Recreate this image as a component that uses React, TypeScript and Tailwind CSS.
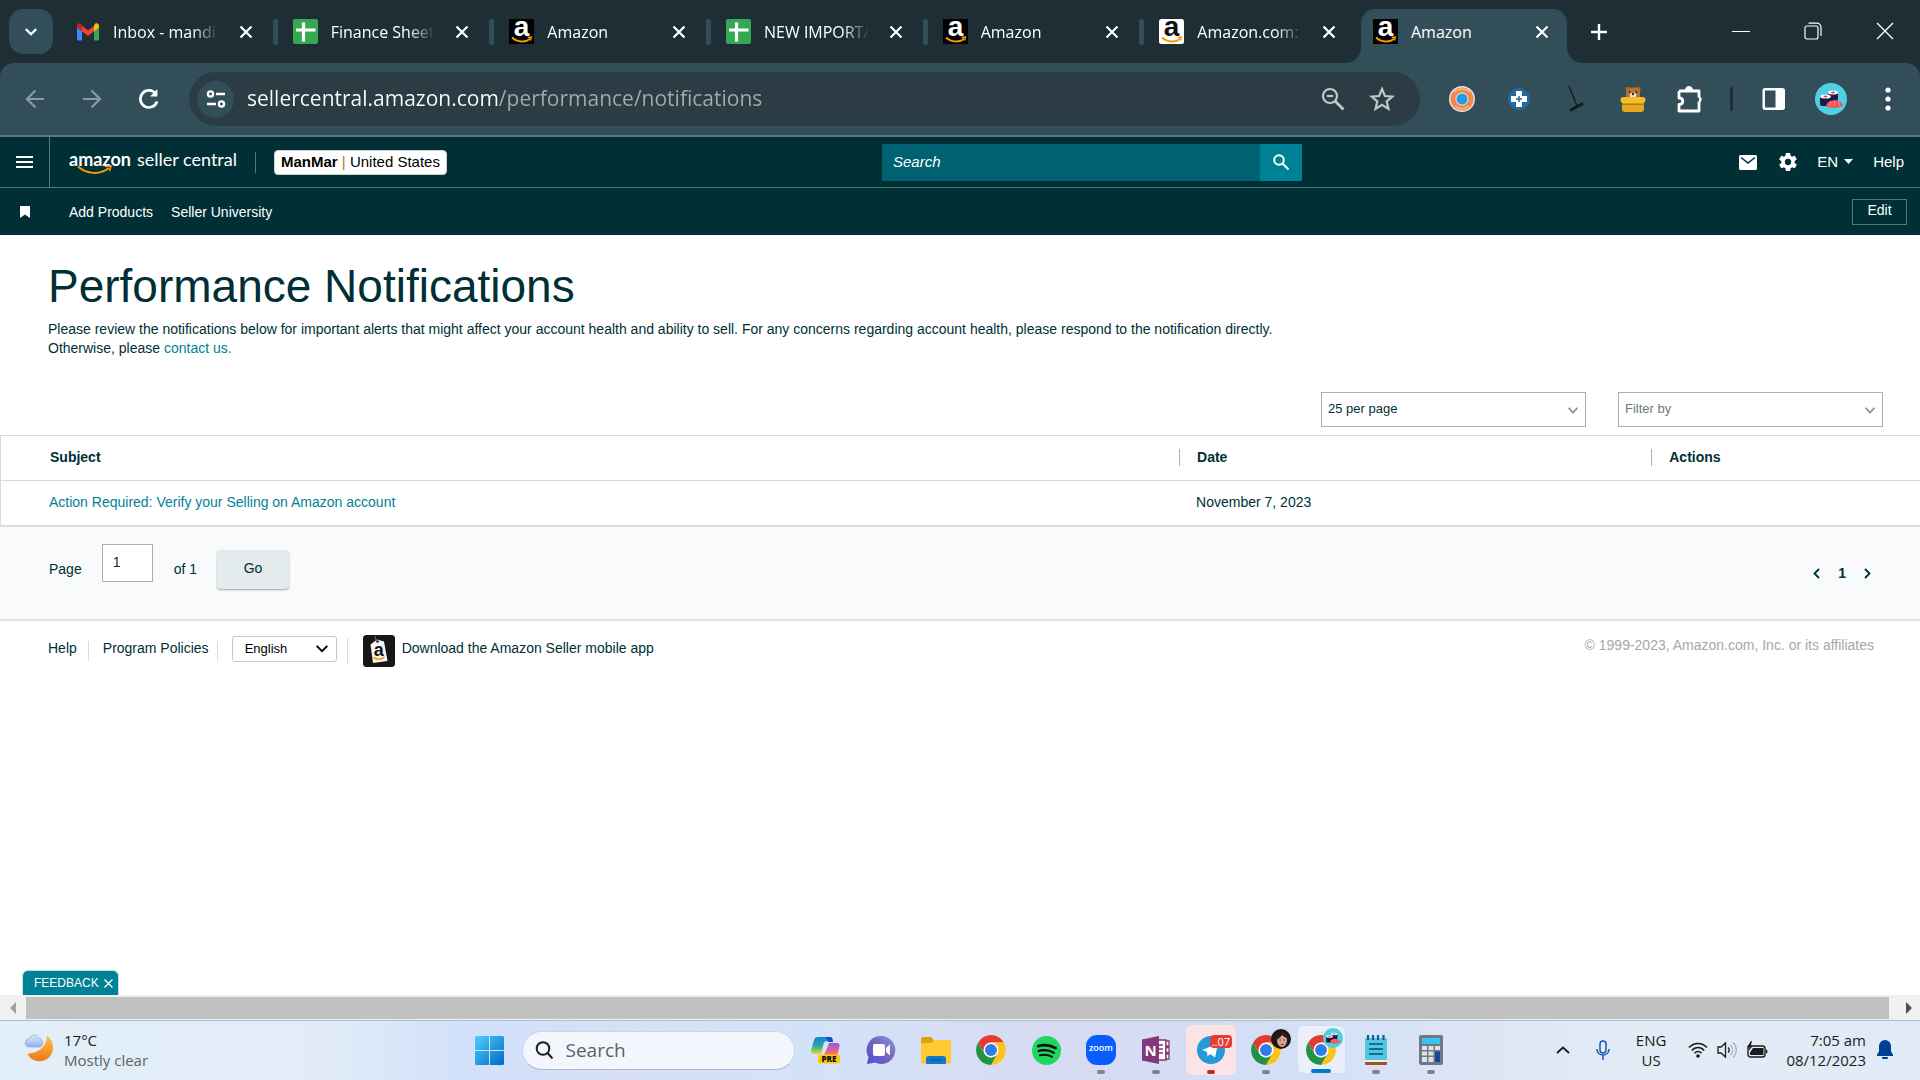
import type { ReactNode } from "react";

const tabs = [
  { title: "Inbox - mandi", icon: "gmail" },
  { title: "Finance Sheet", icon: "sheet" },
  { title: "Amazon", icon: "amazonDark" },
  { title: "NEW IMPORTA", icon: "sheet" },
  { title: "Amazon", icon: "amazonDark" },
  { title: "Amazon.com:", icon: "amazonLight" },
];

function Gmail() {
  return (
    <svg viewBox="0 0 24 24" className="size-6">
      <path d="M1 5.5V19a1.6 1.6 0 0 0 1.6 1.6H6V10.5L1 6.5z" fill="#4285f4" />
      <path d="M18 20.6h3.4A1.6 1.6 0 0 0 23 19V6.5l-5 4z" fill="#34a853" />
      <path d="M18 5.8v5.6l5-3.9V5.6c0-2-2.3-3.1-3.9-1.9z" fill="#fbbc04" />
      <path d="M6 11.4V5.8l6 4.6 6-4.6v5.6L12 16z" fill="#ea4335" />
      <path d="M1 5.6v1.9l5 3.9V5.8L4.900 3.700C3.300 2.500 1 3.600 1 5.600z" fill="#c5221f" />
    </svg>
  );
}

function Sheet() {
  return (
    <svg viewBox="0 0 25 25" className="size-[25px]">
      <rect width="25" height="25" rx="2" fill="#34a853" />
      <path d="M10.500 3.500v19M3 11h19.500" stroke="#fff" strokeWidth="3.200" />
    </svg>
  );
}

function AmazonMark({ dark }: { dark: boolean }) {
  return (
    <svg viewBox="0 0 25 25" className="size-[25px]">
      <rect width="25" height="25" rx={dark ? 0 : 2.5} fill={dark ? "#000" : "#fff"} />
      <text x="12.500" y="17" textAnchor="middle" fontSize="28" fontWeight="700" fontFamily="Liberation Sans, sans-serif" fill={dark ? "#fff" : "#111"}>
        a
      </text>
      <path d="M3 18.500c5.500 5 13.500 5.200 18.300 1.200" stroke="#f90" strokeWidth="2" fill="none" />
      <path d="M18.500 18.400l4-.4-.9 3.500" stroke="#f90" strokeWidth="1.300" fill="none" />
    </svg>
  );
}

function Favicon({ name }: { name: string }) {
  if (name === "gmail") return <Gmail />;
  if (name === "sheet") return <Sheet />;
  return <AmazonMark dark={name === "amazonDark"} />;
}

function Cross({ className }: { className: string }) {
  return (
    <svg viewBox="0 0 14 14" className={className} fill="none" stroke="currentColor" strokeWidth="2.200">
      <path d="M1.500 1.500l11 11M12.500 1.500l-11 11" />
    </svg>
  );
}

function TabStrip() {
  return (
    <div className="flex h-[63px] items-end bg-[#1e2e34] text-base text-white">
      <button aria-label="Search tabs" className="mb-[9px] ml-[9px] flex h-[45px] w-11 shrink-0 items-center justify-center rounded-[14px] bg-[#324e59]">
        <svg viewBox="0 0 14 9" className="h-2 w-3.5" fill="none" stroke="#fff" strokeWidth="2.600">
          <path d="M1.200 1.200L7 7l5.800-5.800" />
        </svg>
      </button>
      <div className="flex w-[1308px] shrink items-end pl-2">
        {tabs.map((tab, i) => (
          <div key={i} className="flex h-[54px] min-w-0 flex-1 items-center">
            <div className="flex w-full items-center pb-[9px] pl-[15px]">
              <Favicon name={tab.icon} />
              <span className="ml-[13px] flex-1 overflow-hidden whitespace-nowrap [mask-image:linear-gradient(to_right,#000_75%,transparent)]">{tab.title}</span>
              <button aria-label="Close tab" className="mx-4 shrink-0 p-1">
                <Cross className="size-3.5" />
              </button>
              <span className={i === 5 ? "h-[26px] w-[5px]" : "h-[26px] w-[5px] rounded-sm bg-[#324e59]"} />
            </div>
          </div>
        ))}
      </div>
      <div className="relative flex h-[54px] w-[206px] shrink-0 items-center rounded-t-[14px] bg-[#324e59] pb-[9px] pl-3 pr-3.5">
        <svg viewBox="0 0 16 16" className="absolute -left-4 bottom-0 size-4" fill="#324e59">
          <path d="M16 0v16H0C9 16 16 9 16 0z" />
        </svg>
        <svg viewBox="0 0 16 16" className="absolute -right-4 bottom-0 size-4" fill="#324e59">
          <path d="M0 0v16h16C7 16 0 9 0 0z" />
        </svg>
        <AmazonMark dark />
        <span className="ml-[13px] flex-1">Amazon</span>
        <button aria-label="Close tab" className="p-1">
          <Cross className="size-3.5" />
        </button>
      </div>
      <button aria-label="New tab" className="mb-[23px] ml-6">
        <svg viewBox="0 0 16 16" className="size-4" stroke="#fff" strokeWidth="2.400">
          <path d="M8 0v16M0 8h16" />
        </svg>
      </button>
      <div className="mb-[23px] ml-auto mr-[26px] flex items-center gap-[54px]">
        <button aria-label="Minimize" className="flex size-[18px] items-center">
          <span className="h-px w-full bg-white" />
        </button>
        <button aria-label="Restore" className="size-[18px]">
          <svg viewBox="0 0 18 18" className="size-[18px]" fill="none" stroke="#fff" strokeWidth="1.200">
            <rect x="1" y="4" width="13" height="13" rx="2" />
            <path d="M4.500 1.200H13a4 4 0 0 1 4 4V14" />
          </svg>
        </button>
        <button aria-label="Close window" className="size-[18px]">
          <svg viewBox="0 0 18 18" className="size-[18px]" stroke="#fff" strokeWidth="1.300">
            <path d="M1 1l16 16M17 1L1 17" />
          </svg>
        </button>
      </div>
    </div>
  );
}

function SushiAvatar({ className }: { className: string }) {
  return (
    <svg viewBox="0 0 32 32" className={className}>
      <circle cx="16" cy="16" r="16" fill="#4dd0e1" />
      <rect x="13" y="9" width="10" height="9" rx="2" fill="#1a1a4b" />
      <ellipse cx="18" cy="9.500" rx="5" ry="2" fill="#fff" />
      <ellipse cx="18" cy="9.500" rx="2" ry="1" fill="#f44336" />
      <rect x="5" y="13" width="11" height="10" rx="2" fill="#1a1a4b" />
      <ellipse cx="10.500" cy="13.500" rx="5.300" ry="2" fill="#fff" />
      <ellipse cx="10.500" cy="13.500" rx="2" ry="1" fill="#f44336" />
      <path d="M11 23c1-7 14-8 17-1-2 3-14 4-17 1z" fill="#f5504e" />
      <path d="M16 18.500l-1.500 4M20 17.500l-1 5.500M24 18.500v4" stroke="#ffab9f" strokeWidth=".8" />
    </svg>
  );
}

function ToolButton({ label, children }: { label: string; children: ReactNode }) {
  return (
    <button aria-label={label} className="flex w-[57px] shrink-0 items-center justify-center">
      {children}
    </button>
  );
}

function Toolbar() {
  return (
    <div className="flex bg-[#1e2e34]">
      <div className="flex h-[74px] w-full items-center rounded-t-[14px] border-b-2 border-[#5f7880] bg-[#324e59] pl-1.5">
        <ToolButton label="Back">
          <svg viewBox="0 0 20 20" className="size-5" fill="none" stroke="#8b9ba1" strokeWidth="2.200">
            <path d="M19 10H2M10.500 1.500L2 10l8.500 8.500" />
          </svg>
        </ToolButton>
        <ToolButton label="Forward">
          <svg viewBox="0 0 20 20" className="size-5" fill="none" stroke="#8b9ba1" strokeWidth="2.200">
            <path d="M1 10h17M9.500 1.500L18 10l-8.500 8.500" />
          </svg>
        </ToolButton>
        <ToolButton label="Reload">
          <svg viewBox="0 0 20 20" className="size-5" fill="none" stroke="#fff" strokeWidth="2.700">
            <path d="M18 12.500A8.500 8.500 0 1 1 16.800 5" />
            <path d="M18.400 0v7.500H11z" fill="#fff" stroke="none" />
          </svg>
        </ToolButton>
        <div className="ml-3 flex h-[54px] min-w-0 flex-1 items-center rounded-full bg-[#2b3c44] pl-2">
          <button aria-label="View site information" className="flex size-[37px] shrink-0 items-center justify-center rounded-full bg-[#324e59]">
            <svg viewBox="0 0 20 18" className="h-[18px] w-5" fill="none" stroke="#fff" strokeWidth="2.300">
              <circle cx="4.500" cy="4" r="2.600" />
              <path d="M10 4h9M1 14h9" />
              <circle cx="15.500" cy="14" r="2.600" />
            </svg>
          </button>
          <label htmlFor="url" className="sr-only">
            Address
          </label>
          <input
            id="url"
            defaultValue="sellercentral.amazon.com/performance/notifications"
            className="ml-[13px] min-w-0 flex-1 bg-[linear-gradient(90deg,#fff_252px,#a3abae_252px)] bg-clip-text text-[21px] text-transparent caret-white outline-none"
          />
          <button aria-label="Zoom" className="mr-6">
            <svg viewBox="0 0 24 24" className="size-6" fill="none" stroke="#c3c7c9" strokeWidth="2.200">
              <circle cx="9" cy="9" r="7" />
              <path d="M14 14l8.500 8.500" strokeWidth="2.800" />
              <path d="M5.800 9h6.400" />
            </svg>
          </button>
          <button aria-label="Bookmark this page" className="mr-[25px]">
            <svg viewBox="0 0 26 26" className="size-[26px]" fill="none" stroke="#c3c7c9" strokeWidth="2.200">
              <path d="M13 3l2.900 7 7.500.600-5.700 4.900 1.800 7.400-6.500-4-6.500 4 1.800-7.400-5.700-4.900 7.500-.600z" />
            </svg>
          </button>
        </div>
        <div className="ml-[13px] flex items-center">
          <ToolButton label="Rocket extension">
            <svg viewBox="0 0 26 26" className="size-[26px]">
              <circle cx="13" cy="13" r="13" fill="#e9e2dc" />
              <circle cx="13" cy="13" r="9" fill="none" stroke="#f08a4b" strokeWidth="5" />
              <path d="M5 6c4-4 12-4 16 0M6 20c4 4 11 3 14 0" stroke="#f7b98d" strokeWidth="1.500" fill="none" />
              <circle cx="13" cy="13" r="5.500" fill="#1f9be8" />
            </svg>
          </ToolButton>
          <ToolButton label="Plus extension">
            <svg viewBox="0 0 22 22" className="size-[22px]">
              <circle cx="11" cy="11" r="11" fill="#24699d" />
              <path d="M11 3v16M3 11h16" stroke="#fff" strokeWidth="6" />
              <path d="M11 8v6M8 11h6" stroke="#24699d" strokeWidth="1.500" />
            </svg>
          </ToolButton>
          <ToolButton label="Broom extension">
            <svg viewBox="0 0 26 26" className="size-[26px]" stroke="#14181a" fill="none">
              <path d="M6 0l8 20" strokeWidth="1.300" />
              <path d="M7 24.500l13-7" strokeWidth="3" />
            </svg>
          </ToolButton>
          <ToolButton label="Honey extension">
            <svg viewBox="0 0 26 26" className="size-[26px]">
              <circle cx="7.500" cy="3" r="2.200" fill="#a8642c" />
              <circle cx="18.500" cy="3" r="2.200" fill="#a8642c" />
              <rect x="6" y="1.500" width="14" height="13" rx="5" fill="#b87333" />
              <ellipse cx="13" cy="9" rx="3.300" ry="2.600" fill="#f3e0c8" />
              <circle cx="13" cy="8" r="1.200" fill="#222" />
              <circle cx="9.500" cy="6" r=".9" fill="#222" />
              <circle cx="16.500" cy="6" r=".9" fill="#222" />
              <path d="M2 15h22v8a3 3 0 0 1-3 3H5a3 3 0 0 1-3-3z" fill="#e6a820" />
              <rect x="0.500" y="11" width="25" height="6" rx="3" fill="#f5bd2e" />
              <path d="M2 18.300h22" stroke="#b07c10" strokeWidth="1.400" />
            </svg>
          </ToolButton>
          <ToolButton label="Extensions">
            <svg viewBox="0 0 28 28" className="size-7" fill="none" stroke="#fff" strokeWidth="2.800" strokeLinejoin="round">
              <path d="M3 6h20v6.500M23 16.500V26H3v-6.500c5 0 5-6.500 0-6.500V6" />
              <path d="M9.500 5a3.500 3.500 0 0 1 7 0zM23.500 11.500a3.500 3.500 0 0 1 0 6z" fill="#fff" strokeWidth="1" />
            </svg>
          </ToolButton>
        </div>
        <span className="ml-3 h-6 w-[3px] rounded-sm bg-[#1e2e34]" />
        <div className="ml-3 mr-1 flex items-center">
          <ToolButton label="Side panel">
            <svg viewBox="0 0 24 24" className="size-6">
              <rect x="1.700" y="2.200" width="20" height="19.500" rx="1.500" fill="none" stroke="#fff" strokeWidth="2.500" />
              <rect x="13.500" y="2" width="9" height="20" fill="#fff" />
            </svg>
          </ToolButton>
          <ToolButton label="Profile">
            <SushiAvatar className="size-8" />
          </ToolButton>
          <ToolButton label="Menu">
            <svg viewBox="0 0 6 24" className="h-6 w-1.5" fill="#fff">
              <circle cx="3" cy="3" r="2.600" />
              <circle cx="3" cy="12" r="2.600" />
              <circle cx="3" cy="21" r="2.600" />
            </svg>
          </ToolButton>
        </div>
      </div>
    </div>
  );
}

function SiteHeader() {
  return (
    <header className="bg-[#002f36] font-['Liberation_Sans',Arial,sans-serif] text-sm text-white">
      <div className="flex h-[51px] items-stretch border-b border-[#587579] text-[15px]">
        <button aria-label="Open menu" className="flex w-[50px] shrink-0 items-center justify-center border-r border-[#587579]">
          <svg viewBox="0 0 17 12" className="h-3 w-[17px]" stroke="#fff" strokeWidth="1.800">
            <path d="M0 1h17M0 6h17M0 11h17" />
          </svg>
        </button>
        <div className="flex flex-[832] items-center">
          <a href="#home" className="relative ml-[19px] flex items-baseline gap-1.5 pb-1.5 font-['Lato',sans-serif] text-lg leading-6">
            <span className="font-bold">amazon</span>
            <span>seller central</span>
            <svg viewBox="0 0 36 10" className="absolute left-2 top-[18px] h-2.5 w-9" fill="none" stroke="#ff9900">
              <path d="M1 1.500c9 8 22 8.500 31 1.500" strokeWidth="2" />
              <path d="M28 1.500l6-.500-1.500 5" strokeWidth="1.500" />
            </svg>
          </a>
          <span className="ml-[18px] h-[21px] w-px bg-[#587579]" />
          <button className="ml-[18px] rounded-sm border border-[#c8d0d1] bg-white px-1.5 pb-px leading-[22px] text-black">
            <b>ManMar</b> <span className="text-[#b7791f]">|</span> United States
          </button>
        </div>
        <form className="flex w-[420px] shrink-0 items-center" onSubmit={(e) => e.preventDefault()}>
          <label htmlFor="site-search" className="sr-only">
            Search
          </label>
          <input id="site-search" placeholder="Search" className="h-[37px] min-w-0 flex-1 bg-[#006170] px-[11px] pb-px italic outline-none placeholder:text-white" />
          <button aria-label="Search" className="flex h-[37px] w-[42px] items-center justify-center bg-[#008296]">
            <svg viewBox="0 0 16 16" className="size-4" fill="none" stroke="#fff" strokeWidth="2">
              <circle cx="6" cy="6" r="4.800" />
              <path d="M9.500 9.500l6 6" />
            </svg>
          </button>
        </form>
        <div className="flex flex-[602] items-center justify-end pr-4">
          <button aria-label="Messages">
            <svg viewBox="0 0 18 15" className="h-[15px] w-[18px]">
              <rect width="18" height="15" rx="1.500" fill="#fff" />
              <path d="M2 2.500l7 5.500 7-5.500" fill="none" stroke="#002f36" strokeWidth="1.500" />
            </svg>
          </button>
          <button aria-label="Settings" className="ml-[22px]">
            <svg viewBox="2 2 20 20" className="size-[18px]" fill="#fff">
              <path d="M19.400 13c.04-.32.070-.650.070-1s-.03-.680-.070-1l2.100-1.650a.5.5 0 0 0 .12-.64l-2-3.460a.5.5 0 0 0-.610-.220l-2.490 1a7.300 7.300 0 0 0-1.690-.980l-.380-2.650A.490.490 0 0 0 14 2h-4a.490.490 0 0 0-.490.420l-.380 2.650c-.610.250-1.170.580-1.690.980l-2.490-1a.5.5 0 0 0-.610.220l-2 3.460a.490.490 0 0 0 .120.640L4.600 11c-.04.320-.070.650-.070 1s.03.680.070 1l-2.140 1.650a.5.5 0 0 0-.120.640l2 3.460c.120.220.390.300.610.220l2.490-1c.520.400 1.080.730 1.690.980l.380 2.650c.030.240.240.400.490.400h4c.250 0 .460-.160.490-.400l.380-2.650c.610-.250 1.170-.580 1.690-.980l2.490 1c.230.090.490 0 .610-.220l2-3.460a.5.5 0 0 0-.120-.640zM12 15.500a3.500 3.500 0 1 1 0-7 3.500 3.500 0 0 1 0 7z" />
            </svg>
          </button>
          <button className="ml-5 flex items-center gap-1.5">
            EN
            <svg viewBox="0 0 9 5" className="h-[5px] w-[9px]" fill="#fff">
              <path d="M0 0h9L4.500 5z" />
            </svg>
          </button>
          <a href="#help" className="ml-5">
            Help
          </a>
        </div>
      </div>
      <nav className="flex h-[47px] items-center pl-5 pr-[13px]">
        <svg viewBox="0 0 10 12" className="h-3 w-2.5" fill="#fff">
          <path d="M0 0h10v12L5 8.500 0 12z" />
        </svg>
        <a href="#add" className="ml-[39px]">
          Add Products
        </a>
        <a href="#university" className="ml-[18px]">
          Seller University
        </a>
        <button className="ml-auto h-[26px] w-[55px] border border-[#587579] pb-1">Edit</button>
      </nav>
    </header>
  );
}

function Dropdown({ id, label, value, muted }: { id: string; label: string; value: string; muted?: boolean }) {
  return (
    <div className="relative w-[265px]">
      <label htmlFor={id} className="sr-only">
        {label}
      </label>
      <select id={id} className={muted ? "h-[35px] w-full appearance-none border border-[#a2b3b6] bg-white px-1.5 text-[13px] text-[#6b7b7e]" : "h-[35px] w-full appearance-none border border-[#a2b3b6] bg-white px-1.5 text-[13px] text-[#002f36]"}>
        <option>{value}</option>
      </select>
      <svg viewBox="0 0 10 7" className="pointer-events-none absolute right-2 top-[15px] h-[7px] w-2.5" fill="none" stroke="#8a989b" strokeWidth="1.800">
        <path d="M.6.800L5 5.600 9.400.800" />
      </svg>
    </div>
  );
}

function Main() {
  return (
    <main className="relative flex-1 bg-white font-['Liberation_Sans',Arial,sans-serif] text-sm text-[#002f36]">
      <div className="px-12 pt-6">
        <h1 className="text-[46px] leading-[54px]">Performance Notifications</h1>
        <p className="mt-[7px] max-w-[1230px] leading-[19px]">
          Please review the notifications below for important alerts that might affect your account health and ability to sell. For any concerns regarding account health, please respond to the notification directly.
          <br />
          Otherwise, please{" "}
          <a href="#contact" className="text-[#008296]">
            contact us.
          </a>
        </p>
      </div>
      <div className="mt-[34px] flex justify-end gap-8 pr-[37px]">
        <Dropdown id="per-page" label="Results per page" value="25 per page" />
        <Dropdown id="filter" label="Filter" value="Filter by" muted />
      </div>
      <table className="mt-2 w-full table-fixed border-collapse border border-r-0 border-[#d5dbdb] text-left">
        <thead>
          <tr className="h-[45px] border-b border-[#d5dbdb]">
            <th className="w-[61.4%] pb-0.5 pl-[49px]">Subject</th>
            <th className="w-[24.6%] pb-0.5">
              <span className="block border-l border-[#a2b3b6] pl-[17px] leading-[17px]">Date</span>
            </th>
            <th className="pb-0.5">
              <span className="block border-l border-[#a2b3b6] pl-[17px] leading-[17px]">Actions</span>
            </th>
          </tr>
        </thead>
        <tbody>
          <tr className="h-[45px]">
            <td className="pb-0.5 pl-12">
              <a href="#notification" className="text-[#008296]">
                Action Required: Verify your Selling on Amazon account
              </a>
            </td>
            <td className="pb-0.5 pl-[17px]">November 7, 2023</td>
            <td />
          </tr>
        </tbody>
      </table>
      <div className="flex h-[95px] items-start border-b-2 border-t border-[#dfe3e5] bg-[#f8fafc] pl-[49px] pr-[49px]">
        <label htmlFor="page" className="mt-8">
          Page
        </label>
        <input id="page" defaultValue="1" className="ml-5 mt-[17px] h-[38px] w-[51px] border border-[#a2b3b6] bg-white pb-0.5 pl-2.5 outline-none" />
        <span className="ml-[21px] mt-8">of 1</span>
        <button className="ml-5 mt-[23px] h-[39px] w-[72px] rounded-sm bg-[#e3ebec] pb-1 shadow-[0_1px_2px_rgba(0,0,0,0.35)]">Go</button>
        <div className="ml-auto mt-9 flex items-center gap-[18px] font-bold">
          <button aria-label="Previous page">
            <svg viewBox="0 0 7 11" className="h-[11px] w-[7px]" fill="none" stroke="#002f36" strokeWidth="1.800">
              <path d="M6 1L1.500 5.500 6 10" />
            </svg>
          </button>
          <span>1</span>
          <button aria-label="Next page">
            <svg viewBox="0 0 7 11" className="h-[11px] w-[7px]" fill="none" stroke="#002f36" strokeWidth="1.800">
              <path d="M1 1l4.500 4.500L1 10" />
            </svg>
          </button>
        </div>
      </div>
      <footer className="flex items-start pl-12 pr-[46px] pt-3.5">
        <div className="flex items-center">
          <a href="#footer-help" className="pb-1.5">Help</a>
          <span className="ml-[11px] mr-3.5 h-5 w-px bg-[#d5dbdb]" />
          <a href="#policies" className="pb-1.5">Program Policies</a>
          <span className="ml-2 mr-3.5 h-5 w-px bg-[#d5dbdb]" />
          <div className="relative">
            <label htmlFor="language" className="sr-only">
              Language
            </label>
            <select id="language" className="mb-1 block h-[26px] w-[105px] appearance-none rounded-[3px] border border-[#c4c8c8] bg-white pl-3 text-[13px] text-black">
              <option>English</option>
            </select>
            <svg viewBox="0 0 14 9" className="pointer-events-none absolute right-2 top-[9px] h-2 w-3.5" fill="none" stroke="#000" strokeWidth="2.200">
              <path d="M1 1l6 6 6-6" />
            </svg>
          </div>
          <span className="ml-2.5 h-[26px] w-px bg-[#d5dbdb]" />
          <a href="#app" className="ml-[15px] flex items-center gap-[7px]">
            <svg viewBox="0 0 32 32" className="size-8">
              <rect width="32" height="32" rx="3.500" fill="#161616" />
              <path d="M14 4.500l7 2 3.500 19.500-14.500 2-2.500-18.500z" fill="#f5f5f5" />
              <circle cx="14.500" cy="6.500" r="1.300" fill="#161616" />
              <path d="M12 1c0 3 1 4 2.500 5" stroke="#777" fill="none" />
              <text x="15.800" y="21" textAnchor="middle" fontSize="18" fontWeight="700" fontFamily="Liberation Sans, sans-serif" fill="#111">
                a
              </text>
              <path d="M10.500 22.500c4 2.600 8 2.200 11-.5" stroke="#f90" strokeWidth="1.500" fill="none" />
            </svg>
            <span className="pb-1.5">Download the Amazon Seller mobile app</span>
          </a>
        </div>
        <span className="ml-auto text-[#a5a7a8]">© 1999-2023, Amazon.com, Inc. or its affiliates</span>
      </footer>
      <button className="absolute bottom-0 left-[22px] flex h-[25px] w-[97px] items-center gap-[5px] rounded-t-md border border-b-0 border-[#c9dfe2] bg-[#008296] pl-[11px] text-xs text-white">
        FEEDBACK
        <svg viewBox="0 0 9 9" className="size-[9px]" stroke="#fff" strokeWidth="1.300">
          <path d="M.5.500l8 8M8.500.500l-8 8" />
        </svg>
      </button>
    </main>
  );
}

function ScrollBar() {
  return (
    <div className="flex h-[25px] items-center bg-[#f1f1f1] pb-px pt-0.5">
      <span className="flex w-[26px] shrink-0 justify-center">
        <svg viewBox="0 0 6 12" className="h-3 w-1.5" fill="#a3a3a3">
          <path d="M6 0v12L0 6z" />
        </svg>
      </span>
      <span className="h-[22px] flex-1 bg-[#c1c1c1]" />
      <span className="flex w-[31px] shrink-0 justify-center pl-2">
        <svg viewBox="0 0 6 12" className="h-3 w-1.5" fill="#505050">
          <path d="M0 0v12l6-6z" />
        </svg>
      </span>
    </div>
  );
}

function Chrome() {
  return (
    <svg viewBox="0 0 48 48" className="size-[30px]">
      <circle cx="24" cy="24" r="24" fill="#fff" />
      <path d="M24 12h20.780A24 24 0 0 0 3.220 12l10.390 18L24 24z" fill="#e33b2e" />
      <path d="M34.390 30L24 48A24 24 0 0 0 44.780 12H24l10.390 6z" fill="#fcc31e" />
      <path d="M13.610 30L3.220 12A24 24 0 0 0 24 48l10.390-18L24 36z" fill="#229342" />
      <circle cx="24" cy="24" r="12" fill="#fff" />
      <circle cx="24" cy="24" r="9.500" fill="#2f7be8" />
    </svg>
  );
}

function AppButton({ label, mark, children }: { label: string; mark?: "idle" | "alert" | "active"; children: ReactNode }) {
  return (
    <button aria-label={label} className="flex w-[55px] justify-center">
      <span
        className={
          mark === "alert"
            ? "relative flex size-[50px] items-center justify-center rounded-md bg-[#fce4e6]"
            : mark === "active"
              ? "relative flex size-[49px] items-center justify-center rounded-md border border-[#d5dbea] bg-[#eaf0fa]"
              : "relative flex size-[50px] items-center justify-center"
        }
      >
        {children}
        {mark === "idle" && <span className="absolute bottom-px h-1 w-2 rounded-full bg-[#7d8391]" />}
        {mark === "alert" && <span className="absolute bottom-px h-1 w-2 rounded-full bg-[#c42b1c]" />}
        {mark === "active" && <span className="absolute bottom-0 h-1 w-5 rounded-full bg-[#0078d4]" />}
      </span>
    </button>
  );
}

function Taskbar() {
  return (
    <div className="flex h-[60px] items-center border-t border-[#aebccb] bg-[linear-gradient(90deg,#e2eef8_0%,#e1ecf8_17%,#d2e1fb_24%,#d6dff6_32%,#d4e2f9_42%,#d7dbf1_56%,#d3e0f8_68%,#dfe5f4_78%,#e2ecf7_85%,#e0ebf7_100%)] pb-px text-[15px] text-[#1b1b1b]">
      <div className="flex flex-1 items-center pb-px pl-6">
        <svg viewBox="0 0 30 30" className="mb-1 size-[30px]">
          <defs>
            <linearGradient id="moon" x1="0" y1="0" x2="0" y2="1">
              <stop offset="0" stopColor="#fbc04a" />
              <stop offset="1" stopColor="#ee7a16" />
            </linearGradient>
            <linearGradient id="cloud" x1="0" y1="0" x2="0" y2="1">
              <stop offset="0" stopColor="#dfe9fb" />
              <stop offset="1" stopColor="#8fb0ea" />
            </linearGradient>
          </defs>
          <path d="M23 3c8 5 8 18 0 23-7 4.500-16.500 2-19.500-5.500C14 20.500 22.500 14 23 3z" fill="url(#moon)" />
          <path d="M5.500 14a4 4 0 0 1-.3-8C6.500 1 13 .8 14.500 5c5 0 6 8.500 1 9z" fill="url(#cloud)" stroke="#86a6e0" strokeWidth=".7" />
        </svg>
        <div className="ml-2.5 leading-5">
          <div>17°C</div>
          <div className="text-[#5b626a]">Mostly clear</div>
        </div>
      </div>
      <div className="flex items-center pl-4">
        <button aria-label="Start" className="mr-[18px]">
          <svg viewBox="0 0 29 29" className="size-[29px]">
            <defs>
              <linearGradient id="win" x1="0" y1="0" x2="1" y2="1">
                <stop offset="0" stopColor="#4cd0fb" />
                <stop offset="1" stopColor="#0069c9" />
              </linearGradient>
            </defs>
            <path d="M1.500 0H14v14H0V1.500A1.500 1.500 0 0 1 1.500 0zM15 0h12.500A1.500 1.500 0 0 1 29 1.500V14H15zM0 15h14v14H1.500A1.500 1.500 0 0 1 0 27.500zM15 15h14v12.500a1.500 1.500 0 0 1-1.500 1.500H15z" fill="url(#win)" />
          </svg>
        </button>
        <div className="flex h-[39px] w-[273px] items-center rounded-full border border-[#ccd5e6] border-b-[#aeb9cd] bg-[#f3f6fd] pl-3">
          <svg viewBox="0 0 18 18" className="size-[18px]" fill="none" stroke="#1f1f1f" strokeWidth="2">
            <circle cx="8" cy="7.500" r="6.300" />
            <path d="M12.500 12l5 5.500" />
          </svg>
          <label htmlFor="task-search" className="sr-only">
            Search
          </label>
          <input id="task-search" placeholder="Search" className="ml-[13px] w-40 bg-transparent text-[19px] outline-none placeholder:text-[#5c6066]" />
        </div>
        <div className="ml-1 flex">
          <AppButton label="Copilot">
            <svg viewBox="0 0 30 28" className="h-7 w-[30px]">
              <defs>
                <linearGradient id="cpa" x1="0" y1="0" x2="0" y2="1">
                  <stop offset="0" stopColor="#1485d8" />
                  <stop offset=".5" stopColor="#26a6a0" />
                  <stop offset="1" stopColor="#d9dd2e" />
                </linearGradient>
                <linearGradient id="cpb" x1="0" y1="0" x2="0" y2="1">
                  <stop offset="0" stopColor="#a34fe0" />
                  <stop offset="1" stopColor="#fb7a5c" />
                </linearGradient>
              </defs>
              <path d="M7 1h12c2 0 2.500 1.500 3 4h-6c-2 0-3 1-3.500 3L10 18H3c-2.500 0-3.500-2-2.500-5L3 4c.7-2 2-3 4-3z" fill="url(#cpa)" />
              <path d="M15 1h4c2 0 2.500 1.500 3 5h-5z" fill="#1250c8" />
              <path d="M19 7h7c2 0 3 1.500 2.300 4l-2 8H13l4-9c.5-2 1-3 2-3z" fill="url(#cpb)" />
              <rect x="7" y="18.500" width="22" height="9" rx="2" fill="#ffc60b" />
              <text x="18" y="26" textAnchor="middle" fontSize="8" fontWeight="800" fontFamily="Open Sans, sans-serif" fill="#111">
                PRE
              </text>
            </svg>
          </AppButton>
          <AppButton label="Chat">
            <svg viewBox="0 0 30 30" className="size-[30px]">
              <defs>
                <linearGradient id="chat" x1="1" y1="0" x2="0" y2="1">
                  <stop offset="0" stopColor="#7ba0f0" />
                  <stop offset=".4" stopColor="#7c6bbd" />
                  <stop offset="1" stopColor="#4a4fcf" />
                </linearGradient>
              </defs>
              <path d="M15 1a14 14 0 1 1-6 26.500L1 29l1.500-7A14 14 0 0 1 15 1z" fill="url(#chat)" />
              <rect x="7" y="9" width="12" height="12" rx="2" fill="#fff" />
              <path d="M20 13l4-3.500v11L20 17z" fill="#fff" />
            </svg>
          </AppButton>
          <AppButton label="File Explorer">
            <svg viewBox="0 0 30 27" className="h-[27px] w-[30px]">
              <path d="M0 2a2 2 0 0 1 2-2h8l3 3.500V8H0z" fill="#e0a106" />
              <path d="M0 6h10l3-3h16a1 1 0 0 1 1 1v21.500a1 1 0 0 1-1 1H1a1 1 0 0 1-1-1z" fill="#fdc935" />
              <path d="M5 27v-5c0-2 1-3 3-3h14c2 0 3 1 3 3v5z" fill="#1279cc" />
              <path d="M9 23h12" stroke="#0a4f92" />
            </svg>
          </AppButton>
          <AppButton label="Chrome">
            <Chrome />
          </AppButton>
          <AppButton label="Spotify">
            <svg viewBox="0 0 30 30" className="size-[29px]" fill="none" stroke="#111" strokeLinecap="round">
              <circle cx="15" cy="15" r="15" fill="#1ed760" stroke="none" />
              <path d="M6.500 10.500c6-1.800 12.500-1 18 2" strokeWidth="2.800" />
              <path d="M7 15.500c5.500-1.500 11-.800 15.500 1.800" strokeWidth="2.400" />
              <path d="M8 20c4.500-1 9-.600 12.800 1.500" strokeWidth="2" />
            </svg>
          </AppButton>
          <AppButton label="Zoom" mark="idle">
            <span className="flex size-[30px] items-center justify-center rounded-[11px] bg-[#0b5cff] pb-1 text-[9px] font-semibold text-white">zoom</span>
          </AppButton>
          <AppButton label="OneNote" mark="idle">
            <svg viewBox="0 0 28 28" className="size-7">
              <path d="M14 4h10v20H14z" fill="#fff" stroke="#80397b" strokeWidth="1.500" />
              <path d="M24 5h3v5h-3zM24 11.500h3v5h-3zM24 18h3v5h-3z" fill="#fff" stroke="#80397b" strokeWidth="1.300" />
              <path d="M17 9h4M17 13h4M17 17h4" stroke="#80397b" strokeWidth="1.500" />
              <path d="M0 3.500L17 0v28L0 24.500z" fill="#80397b" />
              <text x="8.500" y="19.500" textAnchor="middle" fontSize="15" fontWeight="700" fontFamily="Open Sans, sans-serif" fill="#fff">
                N
              </text>
            </svg>
          </AppButton>
          <AppButton label="Telegram" mark="alert">
            <svg viewBox="0 0 28 28" className="size-7">
              <circle cx="14" cy="14" r="14" fill="#239bd6" />
              <path d="M5 14l16-6.500-3 14-5-3.500-2.500 2.500-.5-4.500z" fill="#fff" />
            </svg>
            <span className="absolute right-1 top-2.5 rounded bg-[#e93b36] px-0.5 text-[11px] leading-[13px] text-white">..07</span>
          </AppButton>
          <AppButton label="Chrome profile" mark="idle">
            <Chrome />
            <svg viewBox="0 0 20 20" className="absolute right-0 top-1 size-5">
              <circle cx="10" cy="10" r="10" fill="#1d1717" />
              <ellipse cx="11" cy="11" rx="5" ry="7" fill="#d8a48b" />
              <path d="M4 12c0-10 11-10 13-3-3 0-4.500-1.500-6-3-2 3-4.500 4-7 6z" fill="#2a1c1a" />
              <path d="M8.500 11h1.500M12.500 11H14M10 15.500h2.500" stroke="#5a2f26" />
            </svg>
          </AppButton>
          <AppButton label="Chrome profile, current" mark="active">
            <Chrome />
            <SushiAvatar className="absolute right-0.5 top-0.5 size-5" />
          </AppButton>
          <AppButton label="Notepad" mark="idle">
            <svg viewBox="0 0 24 30" className="h-[30px] w-6">
              <rect x="1" y="25" width="22" height="5" rx="1" fill="#a1541a" />
              <rect x="1" y="24" width="22" height="3" fill="#eee" />
              <rect x="1" y="3" width="22" height="22" rx="1" fill="#56c5e4" />
              <path d="M4 0v5M9 0v5M14 0v5M19.500 0v5" stroke="#0e5f86" strokeWidth="2.200" />
              <path d="M5 9h14M5 14h14M5 19h14" stroke="#0e6e94" strokeWidth="1.800" />
            </svg>
          </AppButton>
          <AppButton label="Calculator" mark="idle">
            <svg viewBox="0 0 24 30" className="h-[30px] w-6">
              <rect width="24" height="30" rx="2" fill="#6f7883" />
              <rect x="3" y="3" width="18" height="6" fill="#35c4f2" />
              <path d="M3 11h5v4H3zM9.500 11h5v4h-5zM16 11h5v4h-5zM3 16.500h5v4H3zM9.500 16.500h5v4h-5zM3 22h5v5H3zM9.500 22h5v5h-5z" fill="#dfe3e8" />
              <path d="M16 16.500h5V27h-5z" fill="#14498f" />
            </svg>
          </AppButton>
        </div>
      </div>
      <div className="flex flex-1 items-center justify-end pb-px pr-[27px]">
        <button aria-label="Show hidden icons">
          <svg viewBox="0 0 14 8" className="h-2 w-3.5" fill="none" stroke="#1b1b1b" strokeWidth="1.800">
            <path d="M1 7l6-5.500L13 7" />
          </svg>
        </button>
        <svg viewBox="0 0 14 20" className="ml-[26px] h-5 w-3.5" fill="none" stroke="#1a57b5" strokeWidth="1.500">
          <rect x="4" y="1" width="6" height="12" rx="3" />
          <path d="M1 9c0 8 12 8 12 0M7 15.500V20" />
        </svg>
        <div className="ml-[26px] text-center leading-5">
          <div>ENG</div>
          <div>US</div>
        </div>
        <svg viewBox="0 0 20 16" className="ml-[22px] h-4 w-5" fill="none" stroke="#1b1b1b" strokeWidth="1.500">
          <path d="M1 5.500c5-5.500 13-5.500 18 0M3.800 8.500c3.500-4 9-4 12.400 0M6.500 11.300c2-2.300 5-2.300 7 0" />
          <circle cx="10" cy="14" r="1.800" fill="#1b1b1b" stroke="none" />
        </svg>
        <svg viewBox="0 0 21 18" className="ml-[9px] h-[18px] w-[21px]" fill="none" stroke="#1b1b1b" strokeWidth="1.300">
          <path d="M1 6h3l4.500-4v14L4 12H1z" />
          <path d="M11 6.500c1.500 1.500 1.500 3.500 0 5" />
          <path d="M13.500 4c3 3 3 7 0 10M16 1.500c4.500 4.500 4.500 10.500 0 15" stroke="#aab2bc" />
        </svg>
        <svg viewBox="0 0 21 17" className="ml-[9px] h-[17px] w-[21px]">
          <rect x="1" y="5" width="17" height="11" rx="2.500" fill="none" stroke="#1b1b1b" strokeWidth="1.400" />
          <path d="M6 7h10.500v7H3v-2.500z" fill="#1b1b1b" />
          <path d="M19 8.500c2 0 2 4 0 4z" fill="#1b1b1b" />
          <path d="M4 0L0 6h2.500L1.500 10 6 4.500H3.800L5 0z" fill="#1b1b1b" />
        </svg>
        <div className="ml-[18px] text-right leading-5">
          <div>7:05 am</div>
          <div>08/12/2023</div>
        </div>
        <svg viewBox="0 0 16 19" className="ml-[11px] h-[19px] w-4" fill="#003f94">
          <path d="M8 0a6 6 0 0 1 6 6v5.500l2 3V16H0v-1.500l2-3V6a6 6 0 0 1 6-6zM5 17h6a3 3 0 0 1-6 0z" />
        </svg>
      </div>
    </div>
  );
}

export default function App() {
  return (
    <div className="flex min-h-screen flex-col overflow-hidden font-['Open_Sans',sans-serif]">
      <TabStrip />
      <Toolbar />
      <SiteHeader />
      <Main />
      <ScrollBar />
      <Taskbar />
    </div>
  );
}
